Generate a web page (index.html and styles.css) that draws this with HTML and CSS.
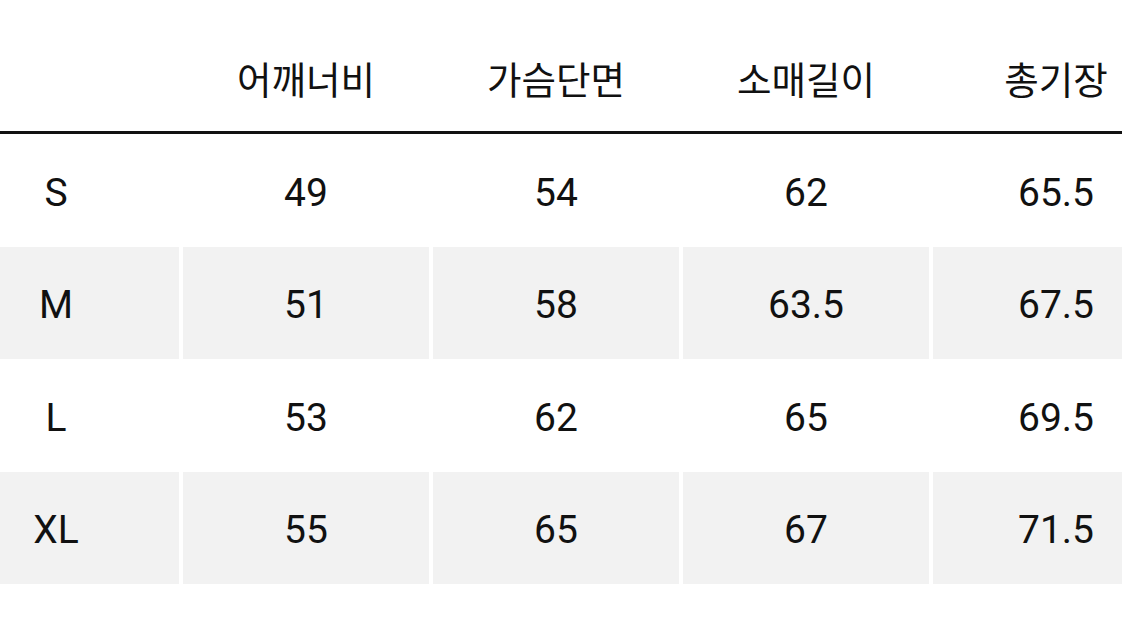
FILE: index.html
```html
<!DOCTYPE html>
<html lang="ko">
<head>
<meta charset="utf-8">
<link rel="stylesheet" href="styles.css">
</head>
<body>
<div class="frame">
  <div class="table">
    <div class="row head">
      <div class="cell"></div>
      <div class="cell">어깨너비</div>
      <div class="cell">가슴단면</div>
      <div class="cell">소매길이</div>
      <div class="cell">총기장</div>
    </div>
    <div class="row body">
      <div class="cell">S</div>
      <div class="cell">49</div>
      <div class="cell">54</div>
      <div class="cell">62</div>
      <div class="cell">65.5</div>
    </div>
    <div class="row body alt">
      <div class="cell">M</div>
      <div class="cell">51</div>
      <div class="cell">58</div>
      <div class="cell">63.5</div>
      <div class="cell">67.5</div>
    </div>
    <div class="row body">
      <div class="cell">L</div>
      <div class="cell">53</div>
      <div class="cell">62</div>
      <div class="cell">65</div>
      <div class="cell">69.5</div>
    </div>
    <div class="row body alt">
      <div class="cell">XL</div>
      <div class="cell">55</div>
      <div class="cell">65</div>
      <div class="cell">67</div>
      <div class="cell">71.5</div>
    </div>
  </div>
</div>
</body>
</html>
```

FILE: styles.css
```css
html, body {
  margin: 0;
  padding: 0;
  background: #ffffff;
  overflow: hidden;
}

.frame {
  width: 1122px;
  height: 620px;
  overflow: hidden;
}

.table {
  margin-left: -67px;
  width: 1246px;
  color: #111111;
}

.row {
  display: grid;
  grid-template-columns: repeat(5, 246px);
  column-gap: 4px;
}

.cell {
  display: flex;
  align-items: center;
  justify-content: center;
}

.head {
  height: 131px;
  border-bottom: 3px solid #111111;
}

.head .cell {
  padding-top: 24px;
  box-sizing: border-box;
  font-family: "Noto Sans CJK KR", "Noto Sans", sans-serif;
  font-size: 37.5px;
  font-weight: 400;
}

.body {
  height: 112.5px;
}

.body .cell {
  padding-top: 5px;
  box-sizing: border-box;
  font-family: Roboto, "Noto Sans", sans-serif;
  font-size: 39px;
  font-weight: 400;
}

.alt .cell {
  background: #f2f2f2;
}
```
